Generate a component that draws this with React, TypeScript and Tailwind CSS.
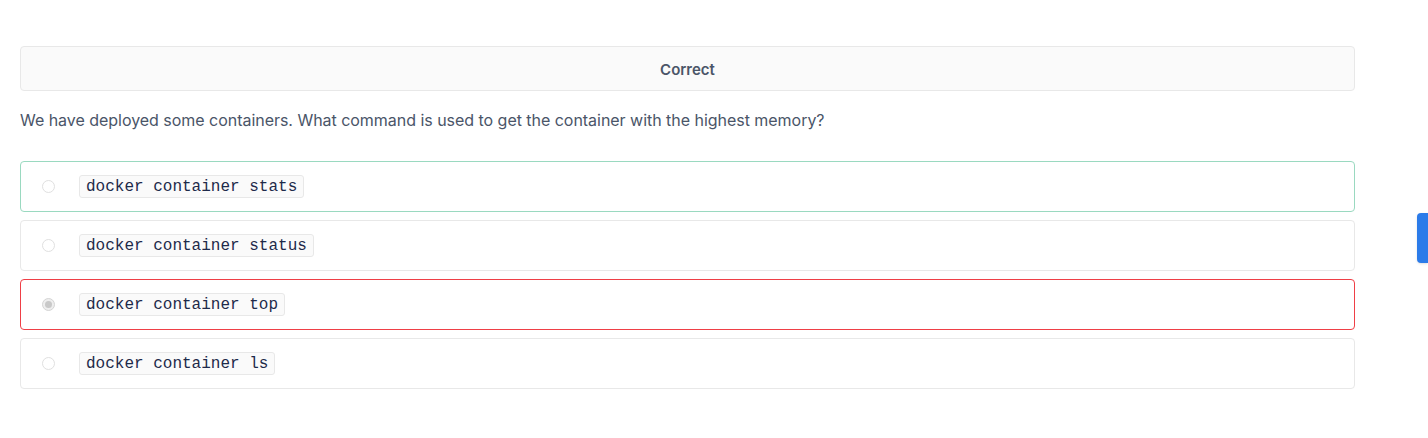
import React from "react";

type Option = { text: string; state: "correct" | "wrong" | "none"; checked?: boolean };

const options: Option[] = [
  { text: "docker container stats", state: "correct" },
  { text: "docker container status", state: "none" },
  { text: "docker container top", state: "wrong", checked: true },
  { text: "docker container ls", state: "none" },
];

function Radio({ checked }: { checked?: boolean }) {
  return (
    <span
      className={
        "flex size-[13px] shrink-0 items-center justify-center rounded-full border " +
        (checked ? "border-[#d4d4d4] bg-[#eeeeee]" : "border-[#e0e0e0] bg-white")
      }
    >
      {checked && <span className="size-[7px] rounded-full bg-[#c8c8c8]" />}
    </span>
  );
}

export default function App() {
  return (
    <div className="relative h-[438px] w-full bg-white font-['Inter',sans-serif]">
      <div className="w-[1335px] pl-5 pt-[46px] box-content">
        <div className="flex h-[45px] items-center justify-center rounded-[4px] border border-[#e8e8e8] bg-[#fafafa] pt-[3px] text-[15px] font-semibold text-[#4a5568]">
          Correct
        </div>
        <p className="mt-[17px] text-base leading-6 tracking-[-0.002em] text-[#4a5568]">
          We have deployed some containers. What command is used to get the container with the highest memory?
        </p>
        <div className="mt-[29px] flex flex-col gap-2">
          {options.map((o) => (
            <div
              key={o.text}
              className={
                "flex h-[51px] items-center gap-6 rounded-[4px] border pl-[21px] " +
                (o.state === "correct"
                  ? "border-[#9ad9c0]"
                  : o.state === "wrong"
                  ? "border-[#ef3f46]"
                  : "border-[#e8e8e8]")
              }
            >
              <Radio checked={o.checked} />
              <code className="h-[23px] rounded-[3px] border border-[#e8e8e8] bg-[#fafafa] px-[6px] pt-px text-base leading-[20px] text-[#1e2a4a] font-['Liberation_Mono',monospace]">
                {o.text}
              </code>
            </div>
          ))}
        </div>
      </div>
      <div className="absolute right-0 top-[213px] h-[50px] w-[11px] rounded-l-[4px] bg-[#2b7be9] shadow-sm" />
    </div>
  );
}
